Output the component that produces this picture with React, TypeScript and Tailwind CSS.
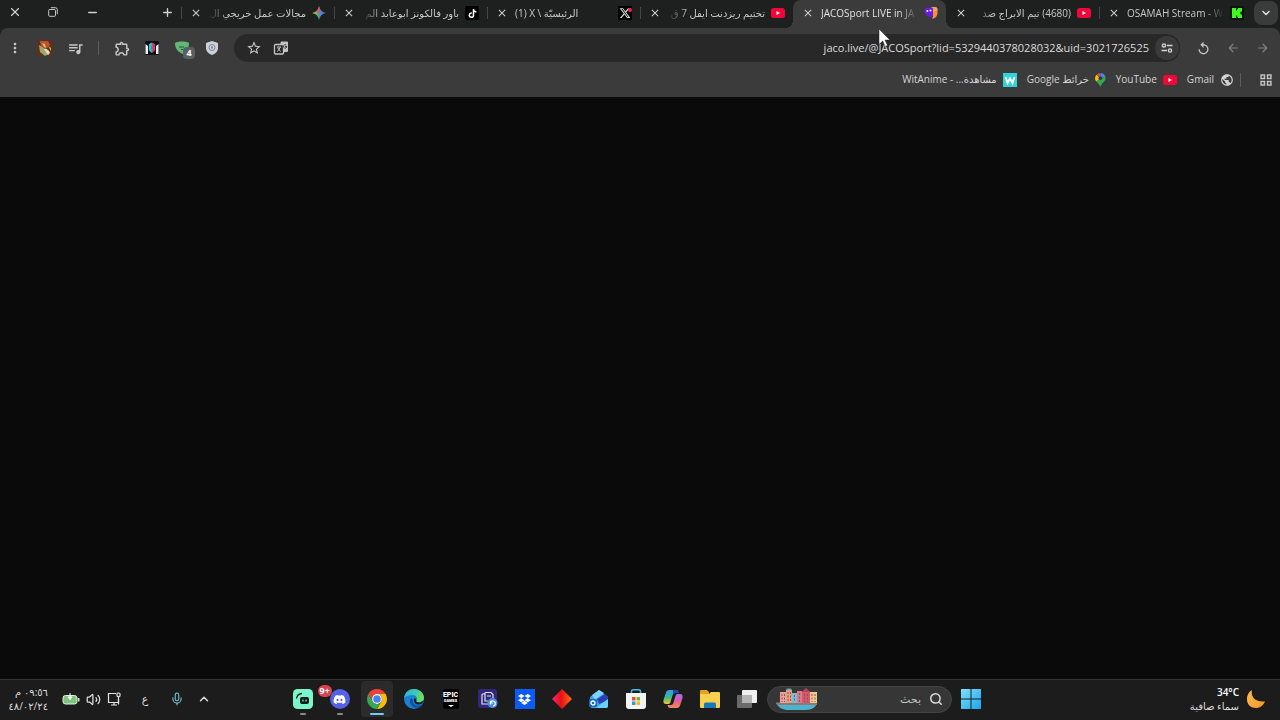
import type { ReactNode } from 'react'
import clsx from 'clsx'
import {
  MdArrowBack,
  MdArrowForward,
  MdClose,
  MdMoreVert,
  MdOutlineExtension,
  MdPublic,
  MdQueueMusic,
  MdReplay,
  MdStarOutline,
} from 'react-icons/md'
import { FaDiscord, FaDropbox, FaTiktok, FaXTwitter } from 'react-icons/fa6'
import { ChevronDown, ChevronUp, Mic, Minus, Plus, Search, Volume2, X } from 'lucide-react'

function YouTubeIcon() {
  return (
    <svg viewBox="0 0 14 10" className="w-3.5">
      <rect width="14" height="10" rx="2.5" fill="#f2063a" />
      <path d="M5.500 3v4L9 5z" fill="#fff" />
    </svg>
  )
}

function KickIcon() {
  return (
    <svg viewBox="0 0 14 14" className="w-3.5">
      <rect width="14" height="14" rx="1" fill="#0a140a" />
      <path d="M2 2h4v2.500h1V3.300h1V2h4v3.500h-1.200v1H10v1h.8v1H12V12H8v-1.300H7V9.500H6V12H2z" fill="#3dfa1c" />
    </svg>
  )
}

function JacoIcon() {
  return (
    <svg viewBox="0 0 14 14" className="w-3.5">
      <path d="M7 1h3.500a3 3 0 0 1 3 3v2c0 4-2 6-5 7z" fill="#f8902c" />
      <path d="M9 1h2a2.500 2.500 0 0 1 2.500 3L9.500 6z" fill="#f0a070" />
      <path d="M3 1.500h4.500A1.500 1.500 0 0 1 9 3v8.500C4 11.500.5 9 .5 4.500A3 3 0 0 1 3 1.500z" fill="#6a1be0" />
      <circle cx="3.300" cy="5" r="1" fill="#fff" />
      <circle cx="6.500" cy="4.500" r="1" fill="#fff" />
    </svg>
  )
}

function XIcon() {
  return (
    <span className="relative flex size-3.5 items-center justify-center bg-black text-[#d8d8d8]">
      <FaXTwitter size={12} />
      <span className="absolute top-0.5 right-0 size-1 rounded-full bg-[#f4214e]" />
    </span>
  )
}

function TikTokIcon() {
  return (
    <span className="flex size-3.5 items-center justify-center rounded-xs bg-black text-white">
      <FaTiktok size={9} />
    </span>
  )
}

function GeminiIcon() {
  return (
    <svg viewBox="0 0 14 14" className="w-3.5">
      <defs>
        <linearGradient id="gemini" x1="0" y1="0" x2="1" y2="0">
          <stop offset="0.1" stopColor="#f5bd2e" />
          <stop offset="0.4" stopColor="#4fae6c" />
          <stop offset="0.65" stopColor="#3f83f0" />
        </linearGradient>
      </defs>
      <path d="M7 0c.8 4 3 6.200 7 7-4 .8-6.200 3-7 7-.8-4-3-6.200-7-7 4-.8 6.200-3 7-7z" fill="url(#gemini)" />
      <path d="M7 0c.6 3 1.300 4.500 2.500 5.500L7 7 4.500 5.500C5.900 4.300 6.600 2.500 7 0z" fill="#e2507f" />
    </svg>
  )
}

function MapsIcon() {
  return (
    <svg viewBox="0 0 10 13" className="h-3.5">
      <path d="M1.400 1.700A5 5 0 0 1 5 0v4.500z" fill="#ea4335" />
      <path d="M5 0a5 5 0 0 1 4.700 3.500L5 5z" fill="#4285f4" />
      <path d="M1.400 1.700 5 5 1.200 8A5 5 0 0 1 1.400 1.700z" fill="#fbbc04" />
      <path d="M9.700 3.500C10.800 7.500 6 9 5 13 4.500 10.500 2.500 9.800 1.200 8L5 5z" fill="#34a853" />
      <circle cx="5" cy="4.800" r="1.700" fill="#263b50" />
    </svg>
  )
}

function WitAnimeIcon() {
  return (
    <svg viewBox="0 0 14 14" className="w-3.5">
      <rect width="14" height="14" fill="#2fd3d8" />
      <path d="M2.500 4 4.500 10 7 5.500 9.500 10 11.500 4" fill="none" stroke="#fff" strokeWidth="2" />
    </svg>
  )
}

function TranslateIcon() {
  return (
    <svg viewBox="0 0 16 16" className="w-4">
      <rect x="1.500" y="4.500" width="9" height="9.500" rx="1" fill="none" stroke="#c4c4c4" strokeWidth="1.300" />
      <path d="M4 7h4M4.500 11.500 7.500 7M4.500 7.500l3 4" stroke="#c4c4c4" fill="none" />
      <path d="M8 1.500h6a1 1 0 0 1 1 1V11a1 1 0 0 1-1 1h-4V4.500H7z" fill="#c4c4c4" />
      <path d="M14 6.500h-2M13.800 6.800a1.700 1.700 0 1 1-.6-1.700" stroke="#444" fill="none" />
    </svg>
  )
}

function SiteInfoIcon() {
  return (
    <svg viewBox="0 0 12 12" className="w-3" fill="none" stroke="#d6d6d6" strokeWidth="1.400">
      <circle cx="3" cy="3.500" r="1.600" />
      <path d="M6 3.500h5.500M.5 8.500H6" />
      <circle cx="9" cy="8.500" r="1.600" />
    </svg>
  )
}

function ProfileIcon() {
  return (
    <svg viewBox="0 0 16 16" className="w-4">
      <rect width="16" height="16" rx="3" fill="#5e2f1f" />
      <path d="M3 1h8l2 4-4 4-5-3z" fill="#b8542c" />
      <path d="M5 3l3 1 1 4-2-1z" fill="#f0b064" />
      <path d="M2 5l5 3 5 6-4 2-5-4z" fill="#9aa86a" />
      <path d="M7 9c2-1 5 1 6 4l-2 2z" fill="#e8dcc0" />
      <path d="M11 6l3 2v3z" fill="#c8ba4c" />
    </svg>
  )
}

function MaskIcon() {
  return (
    <svg viewBox="0 0 14 14" className="w-3.5">
      <rect width="14" height="14" rx="1" fill="#0b1018" />
      <path d="M.5 3v10H3V5zM13.500 3v10H11V5z" fill="#f2f2f2" />
      <path d="M4 3 7 1.500V12L4 9.500z" fill="#28c5d4" />
      <path d="M7 1.500 10 3v6.500L7 12z" fill="#e3355a" />
      <path d="M6 4.500h2v5H6z" fill="#6e7c90" />
    </svg>
  )
}

function GreenShieldIcon() {
  return (
    <span className="relative">
      <svg viewBox="0 0 14 14" className="w-3.5">
        <path d="M0 2c2-2 12-2 14 0 0 6-3 10-6 11C3 11 0 8 0 2z" fill="#5fb878" />
        <path d="M4 6h5M6 8.500h2" stroke="#245c36" fill="none" />
      </svg>
      <span className="absolute top-1.5 -right-1.5 flex size-3 items-center justify-center rounded-sm bg-[#5a5f61] text-[9px] font-bold text-white">
        4
      </span>
    </span>
  )
}

function ShieldIcon() {
  return (
    <svg viewBox="0 0 12 14" className="w-3">
      <path d="M6 0l6 2v5c0 3.500-3 6-6 7-3-1-6-3.500-6-7V2z" fill="#ccd1dc" />
      <circle cx="6" cy="6.500" r="3" fill="none" stroke="#7d8698" />
      <path d="M6 5v3M5 6.500h2" stroke="#7d8698" fill="none" />
    </svg>
  )
}

function RestoreIcon() {
  return (
    <svg viewBox="0 0 10 10" className="w-2.5" fill="none" stroke="#c8c8c8">
      <rect x="0.700" y="2.500" width="6.800" height="6.800" rx="1" />
      <path d="M2.800.7h4.500a2 2 0 0 1 2 2v4.500" />
    </svg>
  )
}

function AppsIcon() {
  return (
    <svg viewBox="0 0 12 12" className="w-3" fill="none" stroke="#c4c4c4" strokeWidth="1.400">
      <path d="M1 1h3.500v3.500H1zM7.500 1H11v3.500H7.500zM1 7.500h3.500V11H1zM7.500 7.500H11V11H7.500z" />
    </svg>
  )
}

// taskbar drawings

function WindowsIcon() {
  return (
    <svg viewBox="0 0 20 20" className="w-5">
      <defs>
        <linearGradient id="win" x1="0" y1="0" x2="1" y2="1">
          <stop offset="0" stopColor="#7fe0fb" />
          <stop offset="1" stopColor="#1ba5ec" />
        </linearGradient>
      </defs>
      <path d="M0 0h9.500v9.500H0zM10.500 0H20v9.500h-9.500zM0 10.500h9.500V20H0zM10.500 10.500H20V20h-9.500z" fill="url(#win)" />
    </svg>
  )
}

function TaskViewIcon() {
  return (
    <svg viewBox="0 0 20 20" className="w-5">
      <rect x="5" y="1" width="15" height="13" rx="1" fill="#f0f0f0" />
      <rect x="0" y="6" width="15" height="13" rx="1" fill="#6a6a6a" />
      <rect x="5" y="6" width="10" height="8" fill="#b4b4b4" />
    </svg>
  )
}

function ExplorerIcon() {
  return (
    <svg viewBox="0 0 20 20" className="w-5">
      <path d="M0 2a1 1 0 0 1 1-1h6l2 2v4H0z" fill="#e2a21c" />
      <path d="M0 5h9l2-2h8a1 1 0 0 1 1 1v14a1 1 0 0 1-1 1H1a1 1 0 0 1-1-1z" fill="#fbd04e" />
      <path d="M4 15a1.500 1.500 0 0 1 1.500-1.500h9A1.500 1.500 0 0 1 16 15v4H4z" fill="#1879b8" />
    </svg>
  )
}

function CopilotIcon() {
  return (
    <svg viewBox="0 0 20 20" className="w-5">
      <defs>
        <linearGradient id="copA" x1="0" y1="0" x2="0" y2="1">
          <stop offset="0" stopColor="#2b9bf0" />
          <stop offset="0.55" stopColor="#42b883" />
          <stop offset="1" stopColor="#e8c83a" />
        </linearGradient>
        <linearGradient id="copB" x1="0" y1="0" x2="0" y2="1">
          <stop offset="0" stopColor="#a66df0" />
          <stop offset="0.5" stopColor="#e45c9d" />
          <stop offset="1" stopColor="#f58a4c" />
        </linearGradient>
      </defs>
      <path
        d="M6 1h7c1.500 0 2 1 2.500 3H12c-1.500 0-2 1-2.500 2.500L7.500 13c-.5 1.500-1 2-2.500 2H3c-2 0-3-1.500-2.500-4L3 3.500C3.500 2 4.500 1 6 1z"
        fill="url(#copA)"
      />
      <path d="M10 1h3c1.500 0 2 1 2.500 3H12c-1 0-1.500.5-2 1.500z" fill="#2446b8" />
      <path
        d="M14 19H7c-1.500 0-2-1-2.500-3H8c1.500 0 2-1 2.500-2.500L12.500 7c.5-1.500 1-2 2.500-2h2c2 0 3 1.500 2.500 4L17 16.500c-.5 1.500-1.500 2.500-3 2.500z"
        fill="url(#copB)"
      />
    </svg>
  )
}

function StoreIcon() {
  return (
    <svg viewBox="0 0 20 20" className="w-5">
      <path d="M5.500 5V2A1.500 1.500 0 0 1 7 .7h6A1.500 1.500 0 0 1 14.500 2v3" fill="none" stroke="#3cc0ee" strokeWidth="1.400" />
      <path d="M0 4h20v13a3 3 0 0 1-3 3H3a3 3 0 0 1-3-3z" fill="#f4f4f4" />
      <path d="M6 8h3.500v3.500H6z" fill="#e8502a" />
      <path d="M10.500 8H14v3.500h-3.500z" fill="#7cb52c" />
      <path d="M6 12.500h3.500V16H6z" fill="#2a9fe0" />
      <path d="M10.500 12.500H14V16h-3.500z" fill="#f5b81e" />
    </svg>
  )
}

function OutlookIcon() {
  return (
    <svg viewBox="0 0 20 20" className="w-5">
      <path d="M1 8 10 1l9 7v9a2 2 0 0 1-2 2H3a2 2 0 0 1-2-2z" fill="#35a7ee" />
      <path d="M3 6l7-5 5 3-9 7z" fill="#7fd3fa" />
      <path d="M8 10l8-5 3 3v3l-9 4z" fill="#2a3fb4" />
      <path d="M7 19 19 10v7a2 2 0 0 1-2 2z" fill="#6cd2f5" />
      <rect x="0" y="10" width="8" height="8" rx="1.500" fill="#1467c8" />
      <circle cx="4" cy="14" r="2" fill="none" stroke="#fff" strokeWidth="1.300" />
    </svg>
  )
}

function DiamondIcon() {
  return (
    <svg viewBox="0 0 20 20" className="w-5">
      <defs>
        <linearGradient id="diamond" x1="0" y1="0" x2="1" y2="0">
          <stop offset="0" stopColor="#f0287e" />
          <stop offset="0.45" stopColor="#e80f12" />
          <stop offset="1" stopColor="#f9701e" />
        </linearGradient>
      </defs>
      <path d="M10 0l10 10-10 10L0 10z" fill="url(#diamond)" />
    </svg>
  )
}

function NotesIcon() {
  return (
    <svg viewBox="0 0 20 20" className="w-5">
      <rect width="19" height="19" rx="3" fill="#30297a" />
      <path d="M4 5h3M4 5v10h6M7 3.500h6l2 2V9M7 3.500V12h3M9 7h4" fill="none" stroke="#e0e0f0" strokeWidth="1.200" />
      <circle cx="14.500" cy="14" r="5" fill="#4b8ee0" />
      <path d="M12.500 15.500a2.500 2.500 0 1 1 2.500 1.500M12.500 12v2h2" fill="none" stroke="#fff" strokeWidth="1.200" />
    </svg>
  )
}

function EpicIcon() {
  return (
    <span className="flex h-5 w-4 flex-col items-center rounded-xs bg-black pt-0.5 font-['Roboto',sans-serif] font-black text-white">
      <span className="text-[7px] leading-2">EPIC</span>
      <span className="text-[4px] leading-1">GAMES</span>
      <svg viewBox="0 0 6 2" className="mt-0.5 w-1.5">
        <path d="M0 0h6L3 2z" fill="#fff" />
      </svg>
    </span>
  )
}

function EdgeIcon() {
  return (
    <svg viewBox="0 0 20 20" className="w-5">
      <defs>
        <linearGradient id="edge" x1="0" y1="0" x2="1" y2="0.3">
          <stop offset="0" stopColor="#2cb3e8" />
          <stop offset="0.6" stopColor="#3cc9b0" />
          <stop offset="1" stopColor="#70de5c" />
        </linearGradient>
      </defs>
      <circle cx="10" cy="10" r="10" fill="#1b7fd4" />
      <path d="M0 9C1 3 5 0 10 0c6 0 10 4.500 10 8.500 0 3-2.500 4.500-5 4.500-2 0-3-.7-2.500-1.600C14 9 12 6 8.500 6 5 6 1.500 7 0 9z" fill="url(#edge)" />
      <path d="M7 9c-2.500 3-.5 8.500 4 9.500 3 .6 6-.5 7.500-3-5 2.500-10.500.5-9.500-4.500z" fill="#124f9c" />
      <path d="M10.500 9c1.500.5 2.200 1.500 1.700 2.800-.4 1.200 1.300 1.900 3.300 1.700 1.500-.2 3-.8 4-2-.2 2-1 3-2 3.600-4 1.400-9-.3-7-6.100z" fill="#1d2226" />
    </svg>
  )
}

function ChromeIcon() {
  return (
    <svg viewBox="0 0 20 20" className="w-5">
      <path d="M1.340 5A10 10 0 0 1 18.660 5H10a5 5 0 0 0-4.330 7.500z" fill="#ea4335" />
      <path d="M18.660 5A10 10 0 0 1 10 20l4.330-7.500A5 5 0 0 0 10 5z" fill="#fbbc05" />
      <path d="M10 20A10 10 0 0 1 1.340 5l4.330 7.500A5 5 0 0 0 14.330 12.500z" fill="#34a853" />
      <circle cx="10" cy="10" r="4.900" fill="#fff" />
      <circle cx="10" cy="10" r="3.800" fill="#4285f4" />
    </svg>
  )
}

function DiscordIcon() {
  return (
    <span className="relative flex size-5 items-center justify-center rounded-full bg-[#5561e8] text-white">
      <FaDiscord size={13} />
      <span
        dir="ltr"
        className="absolute -top-1 -left-3 flex h-3 items-center rounded-full bg-[#d9434c] px-0.5 text-[9px] font-bold"
      >
        9+
      </span>
    </span>
  )
}

function StreamIcon() {
  return (
    <svg viewBox="0 0 20 20" className="w-5">
      <rect width="20" height="20" rx="4.500" fill="#7cf7cc" />
      <path d="M3.500 9.500C4 6.500 6 4.700 9 4.500" fill="none" stroke="#0e2b24" strokeWidth="1.400" />
      <rect x="7" y="8" width="9" height="7" rx="2" fill="#0a1f1a" />
      <path d="M10 10.500v2M13 10.500v2" stroke="#7cf7cc" strokeWidth="1.200" />
    </svg>
  )
}

function HousesIcon() {
  return (
    <svg viewBox="0 0 42 22" className="h-[22px] shrink-0">
      <path d="M0 15c3 5 7 7 12 7h18c6 0 10-3 11-7z" fill="#4ab4d2" />
      <path d="M0 14.500h41V17H1z" fill="#8a7a78" />
      <path d="M4 4h6v11H4z" fill="#f0a09a" />
      <path d="M10 2h6v13h-6z" fill="#e2a07c" />
      <path d="M16 5h5v10h-5z" fill="#78bdd8" />
      <path d="M21 3h5v12h-5z" fill="#d77a88" />
      <path d="M26 4h8v11h-8z" fill="#d8566a" />
      <path d="M34 4h7v11h-7z" fill="#f2c890" />
      <path d="M10 2h6l-1-1.500h-4z" fill="#5aa8b8" />
      <path d="M25.500 4 30 0l4.500 4z" fill="#c23e58" />
      <path
        d="M6 6v8M8.500 6v8M12 4v10M14.500 4v10M18.500 7v7M23.500 5v9M28.500 6v8M31.500 6v8M36 6v8M39 6v8"
        stroke="#7a5a6a"
        strokeDasharray="2 1.500"
      />
    </svg>
  )
}

function MoonIcon() {
  return (
    <svg viewBox="0 0 18 18" className="w-[18px]">
      <defs>
        <linearGradient id="moon" x1="0" y1="0" x2="1" y2="1">
          <stop offset="0" stopColor="#fbc04e" />
          <stop offset="1" stopColor="#f5942c" />
        </linearGradient>
      </defs>
      <path d="M5 0C3.500 6 7.500 12.500 18 11.500 16 16 12.500 18 9 18 4 18 0 14.500 0 9.500 0 5 2 1.500 5 0z" fill="url(#moon)" />
    </svg>
  )
}

function BatteryIcon() {
  return (
    <svg viewBox="0 0 18 12" className="w-[18px]">
      <rect x="1" y="2.500" width="14" height="8.500" rx="2.500" fill="#7cc47f" stroke="#e4f0e4" />
      <path d="M16.700 5v3.500" stroke="#d8ead8" strokeWidth="1.500" />
      <path d="M8 0v4M6 4h4L8 6.500z" stroke="#fff" fill="#fff" />
    </svg>
  )
}

function NetworkIcon() {
  return (
    <svg viewBox="0 0 14 14" className="w-3.5" fill="none" stroke="#e4e4e4" strokeWidth="1.200">
      <path d="M9 1.500H1.500v9h10V7M4 13h6M7 10.500V13" />
      <rect x="10" y="1" width="3" height="3.500" rx="1" />
      <path d="M11.500 4.500v8" />
    </svg>
  )
}

interface Tab {
  title: string
  dir: 'ltr' | 'rtl'
  icon: ReactNode
  active?: boolean
  divider?: boolean
}

const tabs: Tab[] = [
  { title: 'OSAMAH Stream - W', dir: 'ltr', icon: <KickIcon />, divider: true },
  { title: '(4680) تيم الابراج ضد', dir: 'rtl', icon: <YouTubeIcon /> },
  { title: 'JACOSport LIVE in JA', dir: 'ltr', icon: <JacoIcon />, active: true },
  { title: 'تختيم ريزدنت ايفل 7 ق', dir: 'rtl', icon: <YouTubeIcon />, divider: true },
  { title: '(1) X \\ الرئيسيّة', dir: 'ltr', icon: <XIcon />, divider: true },
  { title: 'باور فالكونز ابوعابد الم', dir: 'rtl', icon: <TikTokIcon />, divider: true },
  { title: 'مجالات عمل خريجي ال', dir: 'rtl', icon: <GeminiIcon />, divider: true },
]

const bookmarks = [
  { title: 'Gmail', icon: <MdPublic size={14} /> },
  { title: 'YouTube', icon: <YouTubeIcon /> },
  { title: 'خرائط Google', icon: <MapsIcon /> },
  { title: 'مشاهدة... - WitAnime', icon: <WitAnimeIcon /> },
]

const apps = [
  { name: 'Task view', icon: <TaskViewIcon /> },
  { name: 'Explorer', icon: <ExplorerIcon /> },
  { name: 'Copilot', icon: <CopilotIcon /> },
  { name: 'Store', icon: <StoreIcon /> },
  { name: 'Outlook', icon: <OutlookIcon /> },
  { name: 'Diamond', icon: <DiamondIcon /> },
  {
    name: 'Dropbox',
    icon: (
      <span className="flex size-5 items-center justify-center bg-[#0b5cf5] text-white">
        <FaDropbox size={13} />
      </span>
    ),
  },
  { name: 'Notes', icon: <NotesIcon /> },
  { name: 'Epic Games', icon: <EpicIcon /> },
  { name: 'Edge', icon: <EdgeIcon /> },
  { name: 'Chrome', icon: <ChromeIcon />, active: true },
  { name: 'Discord', icon: <DiscordIcon />, running: true },
  { name: 'Stream', icon: <StreamIcon />, running: true },
]

function IconButton({ label, className, children }: { label: string; className?: string; children: ReactNode }) {
  return (
    <button aria-label={label} className={clsx('flex h-7 shrink-0 items-center justify-center', className ?? 'w-[30px]')}>
      {children}
    </button>
  )
}

function TabItem({ tab }: { tab: Tab }) {
  return (
    <div
      className={clsx(
        'relative flex min-w-0 flex-1 items-center gap-1.5 px-2 pb-0.5',
        tab.active && 'rounded-t-lg bg-[#3b3b3b] text-[#e2e2e2]'
      )}
    >
      {tab.active && (
        <>
          <span className="absolute bottom-0 -left-2 size-2 bg-[radial-gradient(circle_at_0_0,transparent_8px,#3b3b3b_8px)]" />
          <span className="absolute -right-2 bottom-0 size-2 bg-[radial-gradient(circle_at_100%_0,transparent_8px,#3b3b3b_8px)]" />
        </>
      )}
      <span className="flex shrink-0">{tab.icon}</span>
      <span
        dir={tab.dir}
        className={clsx(
          'min-w-0 flex-1 overflow-hidden whitespace-nowrap',
          tab.dir === 'ltr'
            ? '[mask-image:linear-gradient(to_left,transparent,black_20px)]'
            : '[mask-image:linear-gradient(to_right,transparent,black_20px)]'
        )}
      >
        {tab.title}
      </span>
      <button aria-label="Close tab" className="flex w-3.5 shrink-0 justify-center text-[#d0d0d0]">
        <MdClose size={12} />
      </button>
      {tab.divider && <span className="absolute left-0 h-3 w-px bg-[#444847]" />}
    </div>
  )
}

function TabStrip() {
  return (
    <div className="flex h-7 bg-[#1d201f] text-[10px] text-[#c8c8c8]">
      <div className="flex w-7 shrink-0 items-center pr-0.5 pb-0.5">
        <button aria-label="Search tabs" className="flex size-6 items-center justify-center rounded-lg bg-[#3a3c3b] text-[#e0e0e0]">
          <ChevronDown size={12} strokeWidth={3} />
        </button>
      </div>
      <div className="flex min-w-0 flex-1">
        {tabs.map((tab) => (
          <TabItem key={tab.title} tab={tab} />
        ))}
      </div>
      <div className="flex w-[181px] shrink-0 items-center pb-1 text-[#d0d0d0]">
        <IconButton label="New tab" className="w-7">
          <Plus size={13} strokeWidth={2.5} />
        </IconButton>
        <span className="flex-1" />
        <IconButton label="Minimize" className="w-8">
          <Minus size={13} strokeWidth={2.5} />
        </IconButton>
        <IconButton label="Restore" className="w-[46px]">
          <RestoreIcon />
        </IconButton>
        <IconButton label="Close">
          <X size={14} strokeWidth={2} />
        </IconButton>
      </div>
    </div>
  )
}

function Toolbar() {
  return (
    <div className="flex items-center pt-1.5 pr-0.5 text-[#c8c8c8]">
      <IconButton label="Forward">
        <MdArrowForward size={14} className="text-[#808080]" />
      </IconButton>
      <IconButton label="Back">
        <MdArrowBack size={14} className="text-[#808080]" />
      </IconButton>
      <IconButton label="Reload">
        <MdReplay size={15} />
      </IconButton>
      <div className="mr-2 ml-[7px] flex h-7 min-w-0 flex-1 items-center rounded-full bg-[#282828] pr-px pl-1.5">
        <button aria-label="Site information" className="flex size-6 shrink-0 items-center justify-center rounded-full bg-[#3a3a3a]">
          <SiteInfoIcon />
        </button>
        <input
          aria-label="Address"
          dir="ltr"
          className="min-w-0 flex-1 bg-transparent px-1.5 text-right text-[11px] text-[#dcdcdc] outline-none"
          defaultValue="jaco.live/@JACOSport?lid=5329440378028032&uid=3021726525"
        />
        <IconButton label="Translate" className="w-[27px]">
          <TranslateIcon />
        </IconButton>
        <IconButton label="Bookmark" className="w-[27px]">
          <MdStarOutline size={16} />
        </IconButton>
      </div>
      <IconButton label="Shield">
        <ShieldIcon />
      </IconButton>
      <IconButton label="AdGuard">
        <GreenShieldIcon />
      </IconButton>
      <IconButton label="Mask">
        <MaskIcon />
      </IconButton>
      <IconButton label="Extensions">
        <MdOutlineExtension size={17} />
      </IconButton>
      <span className="mx-2 h-3.5 w-px bg-[#5c5c5c]" />
      <IconButton label="Media">
        <MdQueueMusic size={17} />
      </IconButton>
      <IconButton label="Profile">
        <ProfileIcon />
      </IconButton>
      <IconButton label="Menu">
        <MdMoreVert size={16} />
      </IconButton>
    </div>
  )
}

function Bookmarks() {
  return (
    <nav className="flex h-[35px] items-center px-2 text-[10px] text-[#d4d4d4]">
      <button aria-label="Apps">
        <AppsIcon />
      </button>
      <span className="mr-[19px] ml-1.5 h-3.5 w-px bg-[#5c5c5c]" />
      <div className="flex gap-2.5">
        {bookmarks.map((b) => (
          <a key={b.title} href="#" className="flex items-center gap-1.5 whitespace-nowrap">
            {b.icon}
            {b.title}
          </a>
        ))}
      </div>
    </nav>
  )
}

function Taskbar() {
  return (
    <footer className="flex h-[41px] shrink-0 items-center border-t border-[#353535] bg-[#1c1c1c] pb-0.5 text-[10px] text-[#dedede]">
      <div className="flex flex-1 items-center gap-2 pr-[15px]">
        <MoonIcon />
        <div className="leading-3.5">
          <div dir="ltr" className="text-right font-semibold text-white">
            34°C
          </div>
          <div>سماء صافية</div>
        </div>
      </div>
      <div className="flex h-full items-center">
        <IconButton label="Start" className="w-[37px]">
          <WindowsIcon />
        </IconButton>
        <label className="ml-0.5 flex h-[27px] w-[185px] items-center gap-2 rounded-full border border-[#444] bg-[#363636] px-2">
          <Search size={14} strokeWidth={2.5} />
          <input
            aria-label="بحث"
            placeholder="بحث"
            className="min-w-0 flex-1 bg-transparent text-[11px] outline-none placeholder:text-[#c8c8c8]"
          />
          <HousesIcon />
        </label>
        {apps.map((app) => (
          <button key={app.name} aria-label={app.name} className="flex h-full w-[37px] items-center justify-center">
            <span className={clsx('relative flex h-9 w-8 items-center justify-center rounded-sm', app.active && 'bg-[#2b2b2b]')}>
              {app.icon}
              {app.active && <span className="absolute bottom-0.5 h-0.5 w-3.5 rounded-full bg-[#76c8ee]" />}
              {app.running && <span className="absolute bottom-0.5 h-0.5 w-1.5 rounded-full bg-[#8a8a8a]" />}
            </span>
          </button>
        ))}
      </div>
      <div className="flex flex-1 items-center justify-end pl-2">
        <IconButton label="Hidden icons" className="w-[26px]">
          <ChevronUp size={14} strokeWidth={2.5} />
        </IconButton>
        <IconButton label="Microphone" className="w-7">
          <Mic size={14} className="text-[#6fb9c4]" />
        </IconButton>
        <span className="w-9 text-center text-[11px]">ع</span>
        <button aria-label="Quick settings" className="mr-1.5 ml-3.5 flex items-center gap-1.5">
          <NetworkIcon />
          <Volume2 size={15} />
          <BatteryIcon />
        </button>
        <div className="w-10 leading-3.5 whitespace-nowrap">
          <div>
            <bdo dir="ltr">م ٠٩:٥٦</bdo>
          </div>
          <div>
            <bdo dir="ltr">٤٨/٠٢/٢٤</bdo>
          </div>
        </div>
      </div>
    </footer>
  )
}

export default function App() {
  return (
    <div
      dir="rtl"
      className="relative flex min-h-screen flex-col overflow-hidden bg-[#0a0a0a] font-['Open_Sans','Noto_Sans','DejaVu_Sans',sans-serif]"
    >
      <header className="bg-[#1d201f]">
        <TabStrip />
        <div className="rounded-t-lg bg-[#3b3b3b]">
          <Toolbar />
          <Bookmarks />
        </div>
      </header>
      <main className="flex-1" />
      <Taskbar />
      <svg viewBox="0 0 12 19" className="pointer-events-none absolute top-7 left-[878px] h-[19px]">
        <path d="M1 1v15.500l3.700-3.500 2.400 5.400 2.400-1-2.400-5.300H12z" fill="#fff" stroke="#222" strokeWidth="0.500" />
      </svg>
    </div>
  )
}
